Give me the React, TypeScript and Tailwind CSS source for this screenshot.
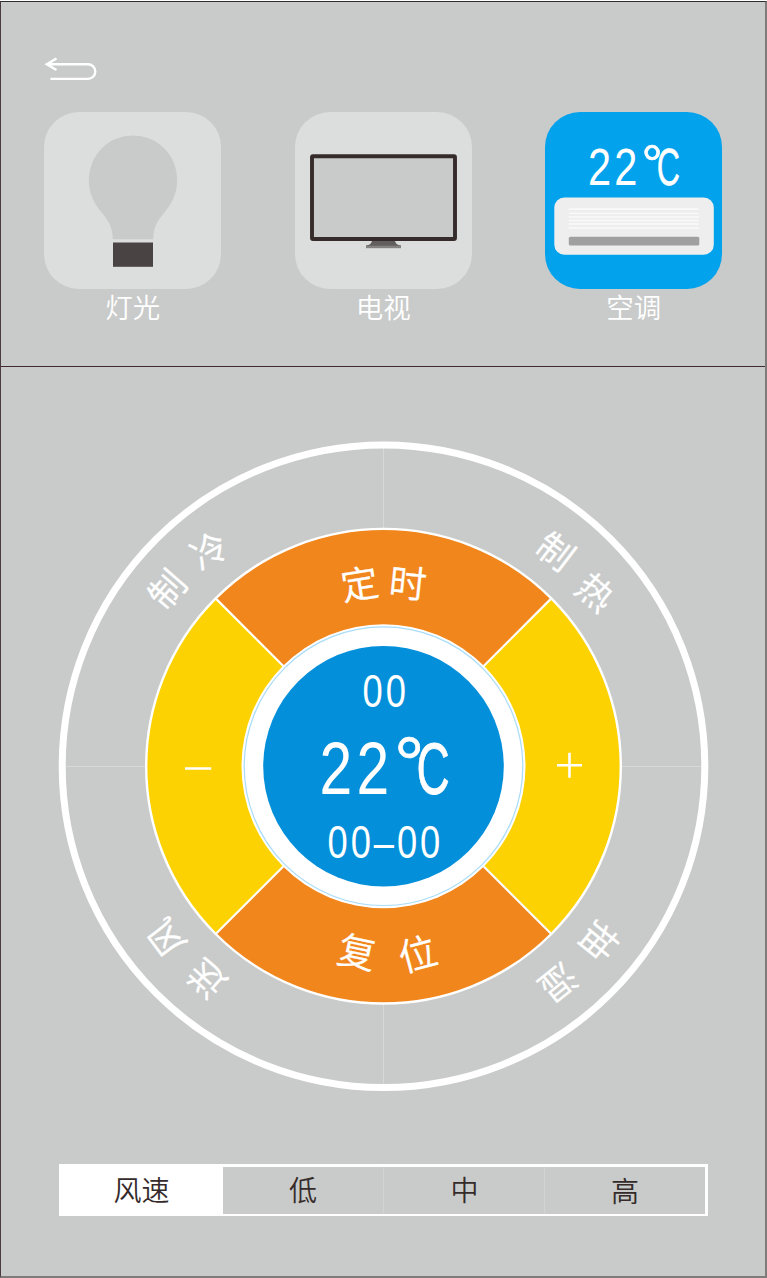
import React from "react";

const FONT = '"Liberation Sans", "Noto Sans CJK SC", sans-serif';
const CJK = '"Noto Sans CJK SC", sans-serif';

type GlyphProps = { ch: string; x: number; y: number; size: number; rotate?: number };

function Glyph({ ch, x, y, size, rotate = 0 }: GlyphProps) {
  return (
    <text
      transform={`translate(${x} ${y}) rotate(${rotate})`}
      y={size * 0.38}
      fontSize={size}
      fontFamily={CJK}
      fontWeight={350}
      fill="#fff"
      stroke="#fff"
      strokeWidth={0.35}
      textAnchor="middle"
    >
      {ch}
    </text>
  );
}

type DigitsProps = { text: string; x: number; y: number; size: number; advance: number; sx?: number; bold?: number };

function Digits({ text, x, y, size, advance, sx = 0.8, bold = 0 }: DigitsProps) {
  return (
    <>
      {text.split("").map((ch, i) => (
        <text
          key={i}
          transform={`translate(${x + i * advance} ${y}) scale(${sx} 1)`}
          fontSize={size}
          fontFamily={FONT}
          fill="#fff"
          stroke="#fff"
          strokeWidth={bold}
          textAnchor="middle"
        >
          {ch}
        </text>
      ))}
    </>
  );
}

function BackIcon() {
  return (
    <svg className="block" width="54" height="26" viewBox="0 0 54 26" fill="none" stroke="#fff" strokeWidth="2.4">
      <path d="M12.500 1.500 2.800 7.300 12.500 13M3.500 7.300H44a7.300 7.300 0 0 1 0 14.600H6.500" />
    </svg>
  );
}

function BulbIcon() {
  return (
    <svg className="block h-full w-full" viewBox="-0.5 -0.5 177 177">
      <path
        d="M88.500 23a44.200 44.200 0 0 0-44.200 44.200c0 14 5.500 24 13.500 33.500 6 7 10.500 14.500 10.500 26h40.400c0-11.500 4.500-19 10.500-26 8-9.500 13.500-19.500 13.500-33.500A44.200 44.200 0 0 0 88.500 23Z"
        fill="#c9cbca"
      />
      <rect x="68.500" y="130" width="40" height="24.300" fill="#494443" />
    </svg>
  );
}

function TvIcon() {
  return (
    <svg className="block h-full w-full" viewBox="0 -0.4 177 177">
      <path d="M77 128h23c.5 3 2 4.500 6 5v2.500H71V133c4-.5 5.500-2 6-5Z" fill="#625e5e" />
      <rect x="71" y="133.300" width="35" height="2.500" fill="#858282" />
      <rect x="17" y="43.800" width="143" height="82.800" rx="1" fill="#c9cbca" stroke="#352b2b" strokeWidth="3.900" />
    </svg>
  );
}

function AirconIcon() {
  return (
    <svg className="block h-full w-full" viewBox="-0.3 -0.5 177 177">
      <Digits text="22" x={54.3} y={72.7} size={52} advance={26.2} sx={0.8} />
      <Digits text="°" x={106.700} y={70} size={53} advance={0} sx={1} bold={0.6} />
      <Digits text="C" x={123} y={72.700} size={52} advance={0} sx={0.62} bold={0.5} />
      <rect x="9" y="85" width="159.500" height="57.300" rx="10" fill="#eee" />
      {[96.500, 100.800, 104.500, 108, 111.500, 115.500].map((y) => (
        <path key={y} d={`M23.500 ${y}h130`} stroke="#fafafa" strokeWidth="1.300" />
      ))}
      <rect x="23.500" y="124.300" width="130.500" height="8.800" rx="1.500" fill="#a0a0a0" />
    </svg>
  );
}

function DeviceTile({ label, active, children }: { label: string; active?: boolean; children: React.ReactNode }) {
  return (
    <button className="flex w-[177px] flex-col items-center">
      <span className={`block h-[177px] w-[177px] rounded-[35px] ${active ? "bg-[#02a2ec]" : "bg-[#dcdedd]"}`}>
        {children}
      </span>
      <span className="-mt-[1px] text-[27.500px] leading-[36px] font-[350] text-white">{label}</span>
    </button>
  );
}

function Dial() {
  const c = 325;
  const k = Math.SQRT1_2;
  const sector = (a: number) => {
    const p = (r: number, deg: number) =>
      `${c + r * Math.cos((deg * Math.PI) / 180)} ${c + r * Math.sin((deg * Math.PI) / 180)}`;
    return `M${p(141, a)}L${p(237, a)}A237 237 0 0 1 ${p(237, a + 90)}L${p(141, a + 90)}A141 141 0 0 0 ${p(141, a)}Z`;
  };
  return (
    <svg className="block h-[650px] w-[650px] overflow-visible" viewBox="-0.5 -0.2 650 650">
      <path d="M325 4V646M4 325.300H646" stroke="#d7d8d8" strokeWidth="1" />
      <circle cx={c} cy={c} r="321.300" fill="none" stroke="#fff" strokeWidth="7" />
      <path d={sector(225)} fill="#f0861c" />
      <path d={sector(315)} fill="#fdd202" />
      <path d={sector(45)} fill="#f0861c" />
      <path d={sector(135)} fill="#fdd202" />
      <path
        d={`M${c - 237 * k} ${c - 237 * k}L${c + 237 * k} ${c + 237 * k}M${c + 237 * k} ${c - 237 * k}L${c - 237 * k} ${c + 237 * k}`}
        stroke="#fff"
        strokeWidth="2.200"
      />
      <circle cx={c} cy={c} r="237.300" fill="none" stroke="#fff" strokeWidth="2.400" />
      <circle cx={c} cy={c} r="142" fill="#fff" />
      <circle cx={c} cy={c} r="139.300" fill="none" stroke="#a9dcf8" strokeWidth="1.200" />
      <circle cx={c} cy={c} r="120.300" fill="#038fd9" />

      <Glyph ch="制" x={108.500} y={148} size={36} rotate={-49} />
      <Glyph ch="冷" x={150.500} y={109} size={36} rotate={-30} />
      <Glyph ch="制" x={497} y={110} size={36} rotate={37} />
      <Glyph ch="热" x={537} y={151} size={36} rotate={40} />
      <Glyph ch="抽" x={541} y={500} size={36} rotate={129} />
      <Glyph ch="湿" x={500} y={541.500} size={36} rotate={141} />
      <Glyph ch="送" x={148} y={538} size={36} rotate={-138} />
      <Glyph ch="风" x={107.500} y={497} size={36} rotate={-127} />

      <Glyph ch="定" x={301} y={142.500} size={37.500} rotate={-9} />
      <Glyph ch="时" x={349.500} y={141.500} size={37.500} rotate={6} />
      <Glyph ch="复" x={298.500} y={510.500} size={38} rotate={12} />
      <Glyph ch="位" x={359} y={512.500} size={38} rotate={-15} />

      <path d="M126.500 327.300h26.200M498.500 324h25M511 311.500v25" stroke="#fff" strokeWidth="2.600" />

      <Digits text="00" x={314.200} y={266} size={46} advance={23.100} sx={0.79} />
      <Digits text="22" x={277.300} y={353} size={73.500} advance={37} />
      <Digits text="°" x={350.700} y={349} size={76} advance={0} sx={1} bold={0.6} />
      <Digits text="C" x={374.500} y={353} size={73} advance={0} sx={0.63} bold={0.8} />
      <Digits text="00–00" x={279.200} y={417} size={46} advance={23.100} sx={0.79} />
    </svg>
  );
}

function FanSpeed() {
  return (
    <div className="flex h-[52px] w-[649px] border-t-[3px] border-r-[3px] border-b-2 border-white text-[28px] leading-none font-[350] text-[#352b2b]">
      <span className="flex w-[164px] items-center justify-center bg-white pb-[3px] pl-px">风速</span>
      <button className="flex w-[161px] items-center justify-center border-r border-[#d1d3d2] pb-[3px]">低</button>
      <button className="flex w-[161px] items-center justify-center border-r border-[#d1d3d2] pb-[3px] pl-px">中</button>
      <button className="flex flex-1 items-center justify-center pb-[2px]">高</button>
    </div>
  );
}

export default function App() {
  return (
    <div className="h-[1278px] w-[767px] bg-white pt-px font-['Noto_Sans_CJK_SC',sans-serif]">
      <main className="flex h-[1277px] flex-col border border-r-2 border-b-2 border-t-[#2f2c2c] border-r-[#7f7b7b] border-b-[#7f7b7b] border-l-[#4a3c3e] bg-[#c9cbca]">
        <header className="h-[365px] border-b border-[#43292f] pt-[55px] pl-[43.300px]">
          <BackIcon />
          <nav className="mt-[29.400px] flex w-[678px] justify-between">
            <DeviceTile label="灯光">
              <BulbIcon />
            </DeviceTile>
            <DeviceTile label="电视">
              <TvIcon />
            </DeviceTile>
            <DeviceTile label="空调" active>
              <AirconIcon />
            </DeviceTile>
          </nav>
        </header>
        <section className="flex flex-col items-start pt-[74px] pl-[57px]">
          <Dial />
          <div className="mt-[73px] ml-px">
            <FanSpeed />
          </div>
        </section>
      </main>
    </div>
  );
}
